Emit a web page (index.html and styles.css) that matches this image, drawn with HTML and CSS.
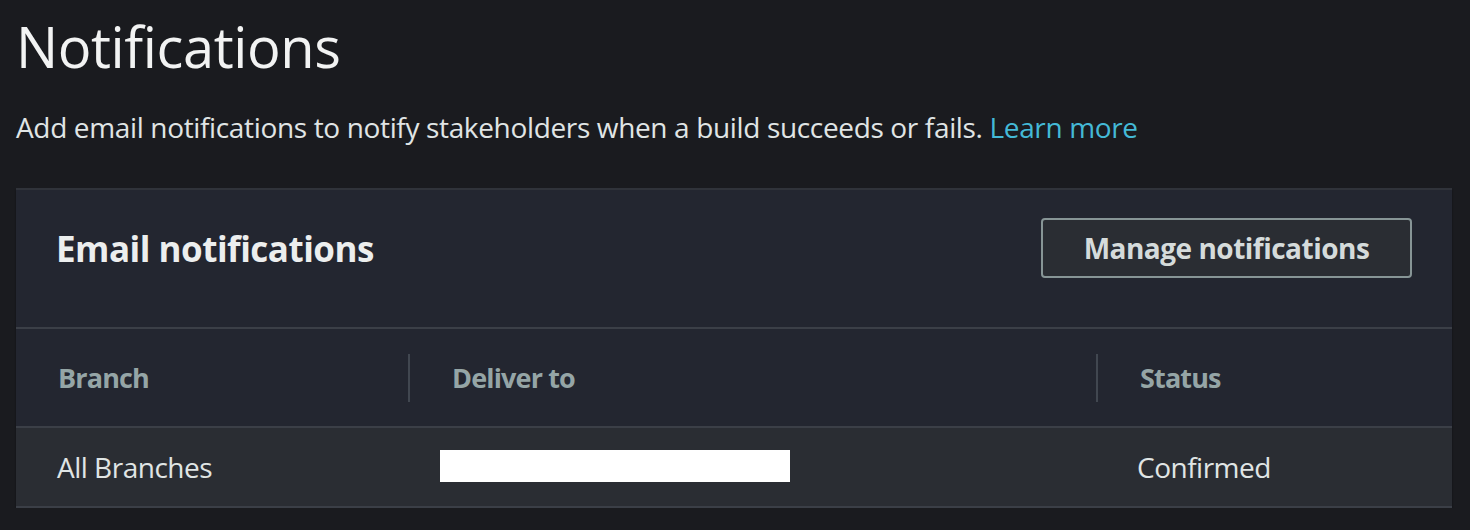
FILE: index.html
```html
<!DOCTYPE html>
<html lang="en">
<head>
<meta charset="utf-8">
<title>Notifications</title>
<link rel="stylesheet" href="styles.css">
</head>
<body>
<main class="page">
  <h1 class="title">Notifications</h1>
  <p class="desc">Add email notifications to notify stakeholders when a build succeeds or fails. <a class="link" href="#">Learn more</a></p>
  <section class="card">
    <header class="card-head">
      <h2 class="card-title">Email notifications</h2>
      <button class="btn" type="button">Manage notifications</button>
    </header>
    <div class="table">
      <div class="row head">
        <div class="cell c1">Branch</div>
        <div class="cell c2 sep">Deliver to</div>
        <div class="cell c3 sep">Status</div>
      </div>
      <div class="row body">
        <div class="cell c1">All Branches</div>
        <div class="cell c2"><span class="redact"></span></div>
        <div class="cell c3">Confirmed</div>
      </div>
    </div>
  </section>
</main>
</body>
</html>
```
FILE: styles.css
```css
* { box-sizing: border-box; }
html, body {
  margin: 0;
  background: #1a1b1f;
}
body {
  font-family: "Open Sans", "Lato", sans-serif;
  color: #d5dbdb;
}
.page {
  padding: 10px 18px 0 16px;
}
.title {
  margin: 0;
  font-size: 56px;
  font-weight: 400;
  line-height: 72px;
  color: #f2f3f3;
  letter-spacing: -0.4px;
}
.desc {
  margin: 25px 0 0 0;
  font-size: 28px;
  line-height: 40px;
  color: #e0e5e5;
  letter-spacing: -0.35px;
}
.link {
  color: #44b9d6;
  text-decoration: none;
}
.card {
  margin-top: 41px;
  background: #232630;
  border-top: 2px solid #30333a;
  box-shadow: 0 2px 2px rgba(0,0,0,0.4);
}
.card-head {
  display: flex;
  align-items: center;
  justify-content: space-between;
  padding: 28px 40px 49px 40px;
  border-bottom: 2px solid #3b3f47;
}
.card-title {
  margin: 0;
  font-size: 35px;
  font-weight: 700;
  color: #eceeee;
  letter-spacing: -0.5px;
}
.btn {
  font-family: inherit;
  font-size: 28px;
  font-weight: 700;
  color: #d5dbdb;
  background: #2a2d33;
  border: 2px solid #879596;
  border-radius: 4px;
  width: 371px;
  height: 60px;
  padding: 0;
  letter-spacing: -0.5px;
}
.table {
  display: flex;
  flex-direction: column;
}
.row {
  display: grid;
  grid-template-columns: 392px 688px 1fr;
  align-items: center;
}
.row.head {
  height: 99px;
  border-bottom: 2px solid #3b3f47;
}
.row.body {
  height: 80px;
  background: #2a2d33;
  border-bottom: 2px solid #3b3f47;
}
.cell {
  font-size: 28px;
  letter-spacing: -0.5px;
}
.head .cell {
  font-size: 27px;
  font-weight: 700;
  color: #95a5a6;
  line-height: 48px;
  padding-left: 42px;
  letter-spacing: -0.85px;
}
.head .sep {
  border-left: 2px solid #414750;
}
.body .cell {
  color: #e0e5e5;
  padding-left: 41px;
}
.body .c2 {
  padding-left: 32px;
  display: flex;
}
.redact {
  display: block;
  width: 350px;
  height: 32px;
  background: #ffffff;
  margin-top: -2px;
}
```
